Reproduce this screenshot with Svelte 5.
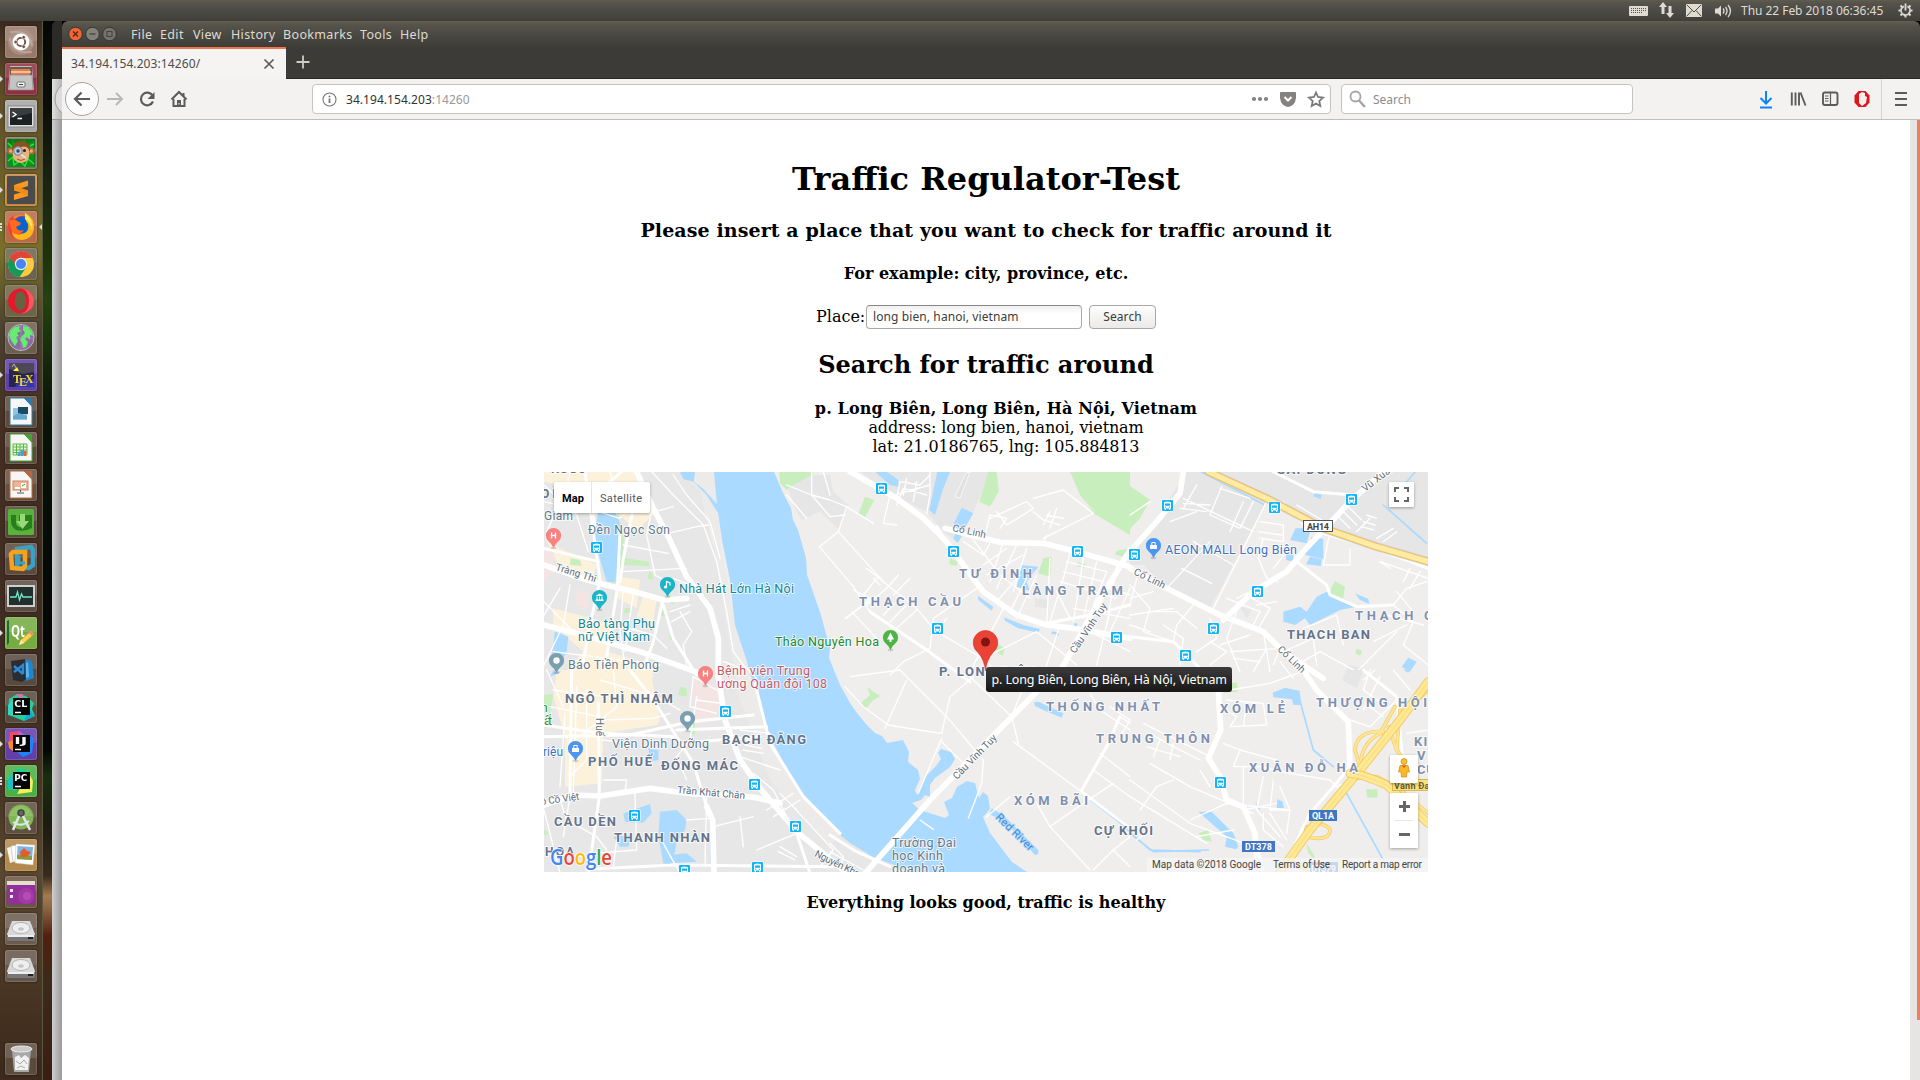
<script>
  const gloss = '<rect width="32" height="15" rx="2" fill="#fff" opacity=".13"/>';
  const doc = (c, inner) =>
    `<path d="M5 2H19L27 10V29H5Z" fill="#f6f7f6" stroke="${c}"/><path d="M19 2H27V11Z" fill="${c}"/>${inner}`;
  const disk =
    '<path d="M7 8H25L30 21V27H2V21Z" fill="#d8d8d8"/><path d="M2 22H30V27Q30 28 29 28H3Q2 28 2 27Z" fill="#777"/><path d="M3 22H29V24H3Z" fill="#eee"/><ellipse cx="16" cy="15" rx="9" ry="5.5" fill="#eee" stroke="#b5b5b5"/><ellipse cx="16" cy="16" rx="2.5" ry="1.3" fill="#ccc" stroke="#aaa" stroke-width=".5"/><path d="M23 25h5" stroke="#222" stroke-width="2"/>';
  const box = (t) =>
    `<rect x="8" y="7" width="17" height="17" fill="#050505"/><text x="9.3" y="15.5" font-size="9" font-weight="700" fill="#fff" font-family="DejaVu Sans" textLength="13" lengthAdjust="spacingAndGlyphs">${t}</text><path d="M10 21.500h6" stroke="#fff" stroke-width="1.500"/>`;

  const apps = [
    { n: 'Dash', bg: '#96796a', s: '<circle cx="16" cy="16" r="13" fill="#b39b8e" opacity=".6"/><path d="M5 6Q25 4 27 20M27 26Q6 28 5 12" fill="none" stroke="#cbb8ad" opacity=".6" stroke-width="2"/><circle cx="16" cy="16" r="8.500" fill="#fff"/><circle cx="16" cy="16" r="4.200" fill="none" stroke="#6a4c3c" stroke-width="1.800"/><g fill="#6a4c3c" stroke="#fff" stroke-width=".7"><circle cx="10.700" cy="16" r="1.800"/><circle cx="18.700" cy="11.300" r="1.800"/><circle cx="18.700" cy="20.700" r="1.800"/></g>' },
    { n: 'Files', bg: '#8f3146', pip: 1, s: '<path d="M5 4Q5 3 6 3H26Q27 3 27 4L29 27H3Z" fill="#bdbdbb"/><path d="M5 4H27V14H5Z" fill="#6e5848"/><path d="M6 6H25V13H6Z" fill="#e37b4a"/><path d="M6 9H26" stroke="#f6d6ba" stroke-width="1.500"/><path d="M5 12H27L28 27H4Z" fill="#c4c4c2" stroke="#888" stroke-width=".7"/><rect x="12" y="19" width="8" height="5" rx="1" fill="#eee" stroke="#777"/><path d="M14 21.500h4" stroke="#444"/>' },
    { n: 'Terminal', bg: '#a5a5a3', pip: 1, s: '<rect x="3" y="6" width="26" height="21" fill="#ddd" stroke="#888"/><rect x="5" y="8" width="22" height="17" fill="#1c2224"/><path d="M5 8H27V13L5 18Z" fill="#47494a" opacity=".7"/><path d="M7.500 12L11 14.500L7.500 17M12.500 18.500H17" stroke="#fff" fill="none" stroke-width="1.400"/>' },
    { n: 'Mono', bg: '#7c6f5f', s: '<rect x="2" y="2" width="28" height="28" fill="#11781a"/><path d="M2 4L6 9L7 2L11 8L20 2L21 8L29 3V30H2Z" fill="#0a921b"/><path d="M3 24L8 20L9 28L15 24L20 29L23 22L29 27M3 6L7 10M29 7L25 9" stroke="#31e03c" fill="none" stroke-width="1.500"/><circle cx="5.500" cy="14" r="3.500" fill="#a76b38"/><circle cx="26.500" cy="14" r="3.500" fill="#a76b38"/><circle cx="5.800" cy="14" r="1.800" fill="#e5ac74"/><circle cx="26.200" cy="14" r="1.800" fill="#e5ac74"/><path d="M7 14Q7 4 16 4Q25 4 25 14Z" fill="#8a4f22"/><path d="M8 13Q10 8 16 10Q22 8 24 13Q26 25 16 26Q6 25 8 13Z" fill="#e8b27c"/><circle cx="19.500" cy="13.500" r="1.500" fill="#222"/><circle cx="13" cy="14" r="4.200" fill="#b9cbd9" stroke="#778"/><circle cx="13" cy="14" r="1.700" fill="#345"/><path d="M16 17.500L21 21" stroke="#dde" stroke-width="2"/><path d="M12 22Q16 25 20 22" stroke="#96603a" fill="none"/>' },
    { n: 'Sublime Text', bg: '#c28440', pip: 1, s: '<rect x="2" y="2" width="28" height="28" rx="1" fill="#4b4b4b"/><path d="M9 11L23 6.500V12L16 14.300L23 16.500V22L9 26V20.500L16 18.500L9 16.500Z" fill="#ff9820"/><path d="M9 16L9 11L23 16.500V22Z" fill="#e77f0d" opacity=".5"/>' },
    { n: 'Firefox', bg: '#b96a49', pip: 3, focus: true, s: '<circle cx="16" cy="16.500" r="12.500" fill="#ff8a16"/><path d="M3 16Q3 7 8 5L9 8Q19 1 25 9Q29 25 16 29Q4 28 3 16Z" fill="#f43b3a"/><circle cx="17" cy="14" r="8.500" fill="#0a62d2"/><path d="M20 2Q30 7 29 18Q27 29 16 29Q7 28 7 20Q11 25 16 23Q25 22 23 13Q19 8 20 2Z" fill="#ffb91e"/><path d="M20 2Q29 8 27 19Q25 10 20 8Z" fill="#ffe95c"/><path d="M4 10Q9 7 14 11Q17 12 15 14L11 16Q13 21 19 19Q14 26 7 21Z" fill="#ff6a1b"/>' },
    { n: 'Chrome', bg: '#6c6450', s: '<circle cx="16" cy="16" r="13" fill="#fdca3e"/><path d="M16 16L4.700 9.500A13 13 0 0 0 14.500 29L21.500 19Z" fill="#129b58"/><path d="M4.700 9.500A13 13 0 0 1 27.500 10H16L10 16Z" fill="#e0453a"/><circle cx="16" cy="16" r="6.200" fill="#eee"/><circle cx="16" cy="16" r="5" fill="#4486f4"/>' },
    { n: 'Opera', bg: '#6f6448', s: '<ellipse cx="16" cy="16" rx="13" ry="12.500" fill="#e3192b"/><path d="M16 3.500A13 12.500 0 0 1 16 28.500Q24 27 24 16Q24 5 16 3.500" fill="#ff5560"/><ellipse cx="15.500" cy="16" rx="5.800" ry="9.500" fill="#6a6140"/>' },
    { n: 'Globe', bg: '#6c5f50', s: '<circle cx="16" cy="15.500" r="13" fill="#8a6ca0" stroke="#c0b6c6"/><path d="M4 13L6 8L10 5L15 4L14 7L16 9L12 11L14 14L11 15L13 19L10 24L7 20L5 16ZM18 4L23 5L27 10L28 14L25 13L25 18L22 15L20 17L23 20L21 25L18 26L17 21L15 18L17 14L20 11L18 8Z" fill="#63ef6d"/><path d="M3 16H29M16 3V28" stroke="#bba3c8" stroke-width=".5"/>' },
    { n: 'TeX', bg: '#6040a8', pip: 1, s: '<rect x="4" y="4" width="25" height="24" fill="#26254f"/><path d="M4 4H29V13L18 15L4 10Z" fill="#4c4855"/><path d="M8 12L12 8L14 12Z" fill="#fff13a"/><path d="M7 8L9 5L11 9" stroke="#ddd" fill="none" stroke-width=".7"/><path d="M14 20H29V28H10Z" fill="#2c37b0"/><text font-family="Liberation Serif" font-size="12" font-weight="700" fill="#f4d624"><tspan x="8" y="23.500">T</tspan><tspan x="14" y="27">E</tspan><tspan x="20" y="23.500">X</tspan></text>' },
    { n: 'Writer', bg: '#5d4a3d', s: doc('#2e7cab', '<rect x="8" y="12" width="14" height="12" fill="#8cc6e6"/><path d="M13 11H23V18H13Z" fill="#1d4a61"/><path d="M8 20L14 17L22 20V23H8Z" fill="#64a8cf"/>') },
    { n: 'Calc', bg: '#5d4a3d', s: doc('#43a52b', '<path d="M8 12H22V23H8ZM8 15H22M8 18H22M8 20.500H22M11.500 12V23M15 12V23M18.500 12V23" fill="#e6f6e0" stroke="#5bb845"/><path d="M14 24V20M17 24V18" stroke="#4b9fe0" stroke-width="2.500"/><path d="M20 24V19" stroke="#e8613a" stroke-width="2.500"/>') },
    { n: 'Impress', bg: '#66503f', s: doc('#b8683f', '<rect x="8" y="12" width="15" height="9" fill="#f0b598" stroke="#c88567"/><path d="M10 18H15V20H10ZM16 14H21V19H16Z" fill="#fff"/><path d="M17 17L20 15" stroke="#3c9b33"/><path d="M15.500 21V23M12 24H19" stroke="#555"/>') },
    { n: 'uGet', bg: '#574739', s: '<rect x="3" y="3" width="26" height="26" rx="1.500" fill="#56b23a"/><path d="M6 9H11V18Q13 22 17 21V15H14V9H27V22Q20 26 11 24Q6 21 6 15Z" fill="#2a7d1c"/><path d="M15 8H20V15H24L17.500 23L11 15H15Z" fill="#97d878"/>' },
    { n: 'VMware', bg: '#5d4a3d', s: '<path d="M12 6L26 4L28 7V22L24 25H12Z" fill="none" stroke="#3aa1c5" stroke-width="4.500"/><path d="M6 11L8 9H20V23L18 26L7 25Z" fill="none" stroke="#f6a21d" stroke-width="4.500"/><path d="M14 13V20H20" fill="none" stroke="#3aa1c5" stroke-width="3"/>' },
    { n: 'Monitor', bg: '#5d4c42', s: '<rect x="3" y="6" width="26" height="20" fill="#22302d" stroke="#cfcfcf" stroke-width="2"/><path d="M5 17H11L12.500 12L14.500 20L16.500 14L18 17H27" fill="none" stroke="#73e5cb" stroke-width="1.300"/>' },
    { n: 'Qt Creator', bg: '#76ac42', pip: 1, s: '<path d="M2 4L4 3V26L2 28Z" fill="#196b3d"/><text x="6" y="19.500" font-family="Open Sans" font-size="16" font-weight="700" fill="#fff" textLength="14" lengthAdjust="spacingAndGlyphs">Qt</text><path d="M14 28L16 23L26 14L29 17L19 26Z" fill="#ffd34d" stroke="#f0a030" stroke-width=".6"/><path d="M24 16L26 14L29 17L27 19Z" fill="#e88a7e"/><path d="M14 28L16 23L19 26Z" fill="#fbe8c8"/>' },
    { n: 'Code', bg: '#594a40', s: '<path d="M6 7L21 5V25L17 28L8 26Z" fill="#2a2d33"/><path d="M20 5L27 7L29 24L21 27Z" fill="#2084cf"/><path d="M21 9L23 8L24 23L21 24Z" fill="#5cb6ee"/><path d="M9 12L18 20M9 18L18 11V20" stroke="#2b8bd4" stroke-width="2.500" fill="none"/>' },
    { n: 'CLion', bg: '#574a3c', s: '<path d="M4 8L12 3L21 5L29 12L27 18L30 25L19 30L9 26L3 24Z" fill="#22cfa0"/><path d="M11 3L18 3L17 10Z" fill="#e06ba8"/><path d="M19 30L29 25L24 18Z" fill="#15a7d6"/><path d="M3 14L8 9V24L3 24Z" fill="#2fd8c3"/>' + box('CL') },
    { n: 'IntelliJ', bg: '#623fa9', pip: 1, s: '<path d="M5 4L15 3L17 13L4 14Z" fill="#fb4668"/><path d="M3 14L9 12V24L4 20Z" fill="#f98a2a"/><path d="M19 6L29 10L27 25L18 29L13 25Z" fill="#1f83f5"/><path d="M14 3L21 8L12 9Z" fill="#c95dd4"/>' + box('IJ') },
    { n: 'PyCharm', bg: '#4cae44', pip: 3, s: '<path d="M3 12L13 3L25 6L24 14L10 26L3 24Z" fill="#20d28b"/><path d="M23 6L28 16L27 27L12 29L20 14Z" fill="#f2f056"/><path d="M3 14L9 9V25L3 23Z" fill="#1bc0c4"/>' + box('PC') },
    { n: 'Android Studio', bg: '#60503f', s: '<circle cx="16" cy="15" r="12.500" fill="#7fb554"/><path d="M8 7Q16 1 24 7L28 14H4Z" fill="#a0cc78" opacity=".5"/><circle cx="16" cy="11" r="3" fill="#666" stroke="#444" stroke-width="1.500"/><path d="M14 14L8 28M18 14L25 28" stroke="#dfe5e9" stroke-width="2.600"/><path d="M8 20Q16 26 24 19" stroke="#dfe5e9" stroke-width="1.800" fill="none"/>' },
    { n: 'Shotwell', bg: '#b3894c', pip: 1, s: '<path d="M2 9L8 7L11 22L5 24Z" fill="#f7f7f0"/><path d="M6 7L12 6L14 22L8 23Z" fill="#fff" stroke="#aaa" stroke-width=".5"/><path d="M11 5L30 6L28 26L10 24Z" fill="#fff" stroke="#bbb" stroke-width=".5"/><path d="M12.500 7L28 8L27 21L12 20Z" fill="#7db5e5"/><path d="M12 16L27 17V21L12 20Z" fill="#8a9d34"/><path d="M19 9L22 12L26 13L23 17L20 18L16 18L15 13Z" fill="#e45b2c"/>' },
    { n: 'Workspace', bg: '#6c5544', s: '<rect x="2" y="6" width="28" height="22" rx="1" fill="#932f9b"/><circle cx="21" cy="20" r="8" fill="#b045b0" opacity=".5"/><circle cx="22" cy="20" r="4" fill="#c862c6" opacity=".5"/><path d="M2 5H30V9H2Z" fill="#e2dfcc"/><path d="M5 13H8V16H5ZM5 19H8V22H5Z" fill="#f0e5ef"/>' },
    { n: 'Volume', bg: '#6c5c50', s: disk },
    { n: 'Volume', bg: '#665649', s: disk },
    { n: 'Trash', bg: '#5b4b3d', last: true, s: '<path d="M7 7H26L24 29H9Z" fill="#a8a8a6"/><ellipse cx="16.500" cy="6" rx="10.500" ry="3" fill="#c9c9c7" stroke="#eee"/><path d="M10 14L14 12L16 15L20 12L24 15L23 27H10Z" fill="#f1f1f1"/><path d="M11 18L15 21L19 17L22 21M12 25L16 23L20 25" stroke="#aaa" fill="none"/>' }
  ];

  const menus = [
    ['File', 29], ['Edit', 33], ['View', 38], ['History', 52],
    ['Bookmarks', 77], ['Tools', 40], ['Help', 36]
  ];

  // Map sheets: each is drawn on a 3x grid whose origin sits at (x, y).
  const sheets = [
    { x: 540, y: 465,
      commercial: ['M12 20H300L345 140L290 200L250 160L210 150L150 150L60 60L12 50Z', 'M12 210L60 250L170 300L155 345L50 290Z', 'M40 430L230 480L200 560L340 600V640H60L130 560L40 480Z', 'M235 335L300 345L290 430L225 395Z', 'M310 390L350 400L340 470L290 455Z'],
      health: ['M12 255L42 260L38 320L12 345Z', 'M110 375L150 385L140 430L108 420Z'],
      green: ['M250 278L327 290V304L250 300Z', 'M92 280L120 285L125 303L90 300Z', 'M330 310L342 345L322 340Z', 'M255 430H275V445H250Z', 'M385 390L408 395L400 420L375 405L375 455L360 450Z', 'M718 21H820L815 60L790 45L740 75L720 55Z', 'M390 510L402 525H388Z', 'M230 130L252 210L250 270L238 350L210 360L240 250Z'],
      water: ['M175 140H225L245 190L243 265L225 350L200 350L185 300L160 215Z', 'M420 21H465L462 50L490 72L538 125L546 162L520 122L500 90L460 50L430 42Z', 'M45 500L85 515L80 560L60 600L35 580Z'],
      major: ['M290 20L340 130L385 215L440 335L510 430L535 520L535 640', 'M12 300L110 335L190 358L300 385L370 405L440 400', 'M12 480L130 510L300 560L480 625'],
      medium: ['M135 20L180 345L150 480L120 640', 'M245 20L150 100L165 180', 'M240 200L232 370L190 640', 'M12 250L175 290', 'M280 130L250 280L240 350', 'M370 420L400 520L470 630', 'M370 400L340 530L300 640'],
      minor: ['M335 20L400 90L490 180L530 290L560 440L580 560L610 600L650 640', 'M12 60L110 150L145 260', 'M12 110L140 140', 'M210 20L240 130', 'M300 100L240 160L175 140', 'M90 20L80 70L20 200', 'M250 240L385 265M245 320L440 310', 'M335 135L320 210L345 330L380 350', 'M385 205L470 185L505 180M400 125L345 140', 'M400 30L440 90L510 170L540 280', 'M400 340L450 360L510 430', 'M12 410L90 490M60 370L12 450M90 360L70 480L12 600', 'M250 375L240 500L260 640M190 470L340 510L380 550', 'M280 385L255 560', 'M420 440L455 500L430 540L440 600M550 590L610 610', 'M40 560L360 600', 'M390 440L450 420M395 470L450 440'] },
    { x: 540, y: 670,
      commercial: ['M50 0H330L360 150L350 165L190 190L185 340L75 350L75 200L40 80Z'],
      health: ['M455 20L545 60L530 150L470 165Z'],
      green: ['M12 75L40 72L30 130L12 128Z', 'M420 50L440 55V80L415 75Z', 'M448 140L465 150V195L450 190Z', 'M12 480L25 485L20 495H12Z'],
      water: ['M250 430L330 402L335 430L310 458L255 455Z', 'M360 425L410 420L440 450L435 480L410 515L405 545L390 585L370 580L355 500Z', 'M325 235L355 240L355 270L330 275Z', 'M512 430L524 440V590L512 590Z', 'M220 500L275 495L265 530L240 530Z', 'M388 555L440 550L470 575L390 580Z', 'M40 0L65 5L30 20Z'],
      major: ['M12 405L100 375L180 378L330 355L460 372L570 375L650 383L720 400', 'M535 20L555 150L600 270L660 355L770 485L910 600', 'M500 410L518 450L522 610'],
      medium: ['M175 100L178 380L145 610', 'M95 0L90 370', 'M12 200L270 195L450 155L640 135', 'M270 0L340 90L460 280L500 410', 'M770 490L810 610', 'M140 598L400 585L900 590', 'M12 165L180 190L400 200', 'M645 40L690 220L790 380L900 490', 'M470 215L660 200M410 180L680 170'],
      minor: ['M40 60L200 80M30 110L180 140M75 130L60 350M110 50L100 370M140 60L140 270L90 320M220 0L230 110L120 200', 'M20 0L70 110M180 30L350 80L420 120', 'M190 150L340 145L390 130M185 210L290 220M190 330L260 330L255 370', 'M470 80L450 210L410 260L440 330', 'M530 60L460 20L450 110L530 130M545 100L470 90', 'M600 260L720 300M610 240L670 250M615 225L665 235M620 210L660 215M600 180L690 190', 'M640 310L700 360L740 440L830 540M680 420L760 370M700 440L780 390', 'M750 400L880 540L840 590M720 370L770 420', 'M285 370L290 540L160 550M12 420L60 610M90 380L70 500', 'M440 450L510 445M370 520L420 610M520 470L640 440M600 440L610 530M770 490L650 540', 'M720 530L770 560M715 545L765 570', 'M12 550L140 560M200 540L170 500L80 450L60 390', 'M230 510L220 590M500 380L495 580'] },
    { x: 830, y: 465,
      green: ['M475 20H720L750 90L790 145L900 210V20H540L480 125L448 110Z', 'M105 95L133 105L105 157L85 148Z', 'M640 280L665 275L660 335L625 325Z', 'M360 280L385 290L378 303L358 298Z', 'M500 535L525 550L518 572L498 560Z', 'M742 292L768 297L762 308L740 303Z', 'M860 258L895 250L885 278L855 268Z', 'M-150 22H-50L-100 45L-130 65L-150 55Z'],
      fill: ['M500 20H680L800 145L715 75L615 95L580 125L530 150L485 145L480 125L510 110Z'],
      grey: ['M90 20H480L435 130L385 235L340 200L290 140L190 90Z', 'M-125 70L-55 30H0L10 80L55 120L28 195L-30 140L-85 165L-105 130Z', 'M615 400L655 405L650 430L615 425Z'],
      water: ['M135 20H170L205 45L205 65L180 60Z', 'M322 20H360L340 70L315 150L298 135Z', 'M395 128L430 145L410 180L395 200L395 215L382 233L370 220L380 200L372 175Z', 'M575 300L625 305L590 350L600 378L560 365Z', 'M443 392L490 425L485 437L445 405Z', 'M522 457L580 480L630 492L625 503L565 490L525 467Z', 'M665 500Q680 497 688 508L685 512Q675 505 665 508Z', 'M732 475H742V487H732Z'],
      major: ['M60 20L200 100L280 160L345 225L400 300L460 380L560 450L650 480L730 490L900 520', 'M345 190L440 215L510 232L640 235L740 260L900 305', 'M690 620L800 420L900 255'],
      medium: ['M345 225L320 185', 'M650 475L780 450L900 420', 'M120 440L290 555L420 650'],
      minor: ['M-55 20V90L0 105L50 125L25 200L-32 245L70 365L120 440', 'M25 200L160 350L260 430L310 490', 'M50 125L130 175M-130 90L-70 160M-55 90L-130 60M-55 90L0 155L45 150M-20 20L0 90', 'M70 375L120 400L50 460M65 440L140 520', 'M320 500L440 570L480 600', 'M300 20L300 90L290 145', 'M300 60L190 90M290 90L220 70L200 120M300 30L270 60L210 50L200 100M260 50L250 110M230 40L220 90', 'M180 90L160 175L200 180', 'M440 370L310 460L300 550L220 590L180 630', 'M160 350L110 310M150 360L130 340M170 370L205 330M170 370L110 420M190 390L240 340M210 400L160 450M230 420L180 470M260 435L200 490', 'M45 460L130 400M140 340L100 390M320 500L350 460', 'M480 235L460 270L400 230M430 225L510 330L600 400M460 300L530 250M470 330L580 270M520 230L480 350M560 240L500 370M590 250L550 380', 'M510 190L530 160L480 150L465 210M480 160L590 110L610 130L530 180L500 140M610 100L700 75L790 145L640 220M610 140L640 165L690 180M650 150L700 160M660 140L640 180M680 130L660 190', 'M640 235L650 210M720 265L700 340L660 470M660 280L650 480M540 440L590 340M560 460L620 330M500 410L570 330', 'M710 290L830 320M700 320L820 350M760 280L730 470M800 290L760 460M690 350L860 400M830 320L790 420M680 380L720 460M840 370L900 390', 'M520 430L420 620M690 480L640 630M480 570L620 500L740 600M840 440L800 600M780 500L900 560', 'M730 430L900 460M860 300L830 480M900 370L840 500'] },
    { x: 830, y: 670,
      green: ['M112 52L150 78L128 92L105 118L93 98L120 75Z'],
      water: ['M612 97L625 95L700 130L695 143L640 120L615 108Z', 'M485 415L520 435L625 540L625 553L615 555L530 460L478 432Z'],
      waterline: ['M770 380L860 450L960 540L1110 545'],
      major: ['M110 605L300 390L620 65'],
      medium: ['M0 495L80 545L180 590', 'M755 365L900 475', 'M755 360L830 230L870 140'],
      minor: ['M45 50L100 110L175 165L265 180L335 190', 'M60 20L210 0L350 140L460 270L455 340L415 445', 'M335 190L360 80L430 20M335 205L265 370', 'M335 215L400 280M165 175L230 30M420 20L545 140L565 220', 'M550 215L755 365', 'M545 140L575 65M620 400L660 470L780 600', 'M660 470L760 400L850 340M850 540L900 500M790 600L850 540L900 590', 'M790 300L900 380M810 250L900 320M870 140L900 160M840 110L900 150L870 200', 'M780 70L810 120L900 180M470 440L540 380', 'M0 520L40 560L30 600M270 450L310 478', 'M0 545L100 600'] },
    { x: 1130, y: 465,
      grey: ['M170 20H895V285L600 200L580 180L410 110L240 430L110 370L40 300H0L0 280Z', 'M600 20H895V295L580 190Z', 'M330 425L365 435L350 460Z', 'M655 600L700 610L690 640H640Z'],
      green: ['M0 62L60 105L30 160L0 192Z', 'M605 365L615 348L645 365L640 400L600 385Z', 'M680 550L697 558L690 573L676 565Z'],
      water: ['M497 190L520 190L525 202L540 200L530 235L480 225Z', 'M545 215L580 222V282L525 270Z', 'M540 275L575 282L573 303L528 298Z', 'M460 440L510 425L530 440L560 395L590 380L625 405L680 425L630 435L590 455L540 480L525 460L495 480L460 470Z', 'M675 385L715 402L718 417L690 405Z', 'M835 578L860 590L840 620L815 605Z', 'M470 260L490 265V290L468 285Z', 'M556 82L575 90L572 102L550 94Z'],
      waterline: ['M215 21L400 118', 'M830 50L855 21', 'M760 120L890 235'],
      major: ['M160 20L150 85L80 170L0 260', 'M0 310L110 370L270 450L400 500L460 560L580 640', 'M280 465L370 380L470 320L520 260L660 110L760 20'],
      medium: ['M580 205L720 245L895 310', 'M500 290L590 360L600 390L680 425L790 420', 'M0 515L130 530L240 640', 'M670 90L550 80L430 20'],
      minor: ['M410 110L250 430M160 100L370 200M275 65L240 150L330 190L370 110M200 60L160 130M150 130L230 140M160 115L240 120M270 70L360 100M300 200L340 110M200 140L120 170', 'M0 150L60 110M155 310L245 355M110 370L240 230M190 230L310 300', 'M400 220L385 280L410 340L445 350M390 170L460 180L460 230L390 220M385 200L455 210M470 260L430 310', 'M520 180L460 110M600 200L580 300L660 300L660 250M600 180L500 120', 'M520 490L620 450L640 540M790 420L830 370L890 350M790 420L850 470L820 540L895 600', 'M800 380L850 440M770 450L880 480M730 530L830 480M570 560L680 620L800 500', 'M780 310L750 290L895 340M840 310L820 350M870 320L840 370M720 160L680 200M710 150L740 160M700 170L735 180M695 185L730 195', 'M620 150L660 190M635 135L680 180M650 120L695 165M790 190L740 220M800 200L760 230', 'M0 360L60 430L40 500L130 530L140 480L190 420M0 400L70 380M0 450L130 430M20 340L0 420M70 440L140 440L200 490', 'M100 480L160 520L150 600M60 500L0 480', 'M290 400L390 440L370 480M320 400L400 360M350 390L420 430L380 500M380 420L440 410M320 440L290 520L330 620M400 500L420 620M240 530L290 560L240 600M300 560L450 550L430 600', 'M270 540L360 510M410 550L370 620M460 560L550 520L560 600M500 600L570 560M310 580L390 590M240 460L260 520L200 560M450 590L490 640'],
      rail: ['M235 20L410 100L580 190L740 245L895 290'] },
    { x: 1130, y: 670,
      green: ['M290 38H322V65L285 68Z', 'M708 358L742 357L743 382L712 383Z', 'M530 520L555 560L550 565L535 550Z', 'M205 490L235 480L245 515L220 510Z'],
      grey: ['M650 0H700L680 55L635 30Z'],
      water: ['M428 68L465 53L508 62L515 105L490 105L485 88L430 82Z', 'M205 425L245 425L310 490L325 530L318 538L285 530L290 500Z', 'M442 387L458 395L462 415H440Z', 'M375 395L392 415L385 418Z'],
      waterline: ['M512 100L550 240L610 290', 'M650 370L760 570', 'M0 490L70 545L235 540', 'M825 0L835 5', 'M295 390L285 370'],
      major: ['M265 60L272 180L235 265L270 320L290 390L340 410L375 490L380 560', 'M520 0L560 60L655 155L660 290'],
      medium: ['M660 290L610 350L540 430L515 480L490 540', 'M270 320L290 400', 'M700 0L800 80L820 290', 'M380 520L400 600'],
      minor: ['M40 160L240 260M60 280L180 350L370 430M0 330L180 460L370 530', 'M0 380L230 520M180 450L290 400M30 420L80 350L130 330M210 300L240 350', 'M270 110L320 140L300 170L410 165L400 100L290 90M350 100L340 170', 'M280 220L330 240L310 290L390 290L480 310L600 330M330 240L440 270M340 290L340 400M400 320L380 420L450 500M430 330L420 420L480 420M450 350L480 420L470 490', 'M290 400L380 410L480 420M420 430L470 510M400 430L400 480L460 530M340 420L440 400', 'M660 150L720 170L800 90M720 0L700 60L770 110M735 0L700 30M750 20L700 120M720 110L760 140M790 0L840 60M830 190L895 180', 'M60 190L130 230L210 270M50 230L150 260M90 210L70 260M130 220L120 270M60 480L20 510M310 480L200 500', 'M300 60L420 40L530 0M280 0L260 60M600 330L640 370M610 350L650 340'],
      highway: ['M895 35L810 150L690 300L540 480L440 620', 'M660 310Q690 310 770 345L895 460'],
      ramp: ['M760 185Q680 180 675 240L690 290', 'M710 265Q780 200 755 180M775 170L800 240', 'M690 300Q690 220 750 190L795 110M810 120L800 240L840 290', 'M530 470L520 520L480 570L530 600M560 460Q620 470 590 500Q570 510 530 500M680 325L740 320L800 350L895 430', 'M820 130L895 60'] }
  ];

  // [x, baseline, width, text, size, class, rotation]
  const labels = [
    [551, 473, 35, 'NG DU', 12, 'ward'], [541, 498, 20, 'ON', 12, 'ward'],
    [544, 520, 29, 'Giam', 12, 'poi'], [588, 534, 82, 'Đền Ngọc Sơn', 12, 'poi'],
    [555, 570, 42, 'Tràng Thi', 10, 'road', 17], [679, 593, 115, 'Nhà Hát Lớn Hà Nội', 12.5, 'teal'],
    [578, 628, 77, 'Bảo tàng Phụ', 12.5, 'teal'], [578, 641, 72, 'nữ Việt Nam', 12.5, 'teal'],
    [568, 669, 91, 'Báo Tiền Phong', 12.5, 'poi'], [775, 646, 104, 'Thảo Nguyên Hoa', 12.5, 'park'],
    [717, 674.5, 93, 'Bệnh viện Trung', 12.5, 'med'], [717, 688, 110, 'ương Quân đội 108', 12.5, 'med'],
    [565, 702.5, 108, 'NGÔ THÌ NHẬM', 13, 'ward'], [596, 718, 18, 'Huế', 10, 'road', 90],
    [612, 748, 97, 'Viện Dinh Dưỡng', 12.5, 'poi'], [722, 744, 84, 'BẠCH ĐẰNG', 13, 'ward'],
    [541, 712, 6, 'n', 12, 'park'], [544, 725, 8, 'ất', 12, 'park'], [543, 756, 20, 'riệu', 12, 'shop'],
    [588, 766, 64, 'PHỐ HUẾ', 13, 'ward'], [661, 770, 77, 'ĐỐNG MÁC', 13, 'ward'],
    [677, 793, 68, 'Trần Khát Chân', 10, 'road', 5], [541, 805, 39, 'ồ Cồ Việt', 10, 'road', -8],
    [554, 826, 62, 'CẦU DỀN', 13, 'ward'], [614, 842, 96, 'THANH NHÀN', 13, 'ward'],
    [545, 856, 29, 'HOA', 12, 'ward'], [814, 856, 56, 'Nguyễn Khoái', 10, 'road', 26],
    [952, 531, 34, 'Cổ Linh', 10, 'road', 12], [959, 578, 73, 'TƯ ĐÌNH', 13, 'area'],
    [1022, 595, 101, 'LÀNG TRẠM', 13, 'area'], [859, 606, 102, 'THẠCH CẦU', 13, 'area'],
    [1075, 654, 58, 'Cầu Vĩnh Tuy', 10, 'road', -56], [939, 676, 96, 'P. LONG BIÊN', 13, 'ward'],
    [1046, 711, 114, 'THỐNG NHẤT', 13, 'area'], [1096, 743, 114, 'TRUNG THÔN', 13, 'area'],
    [957, 780, 58, 'Cầu Vĩnh Tuy', 10, 'road', -46], [1014, 805, 74, 'XÓM BÃI', 13, 'area'],
    [1094, 835, 59, 'CỰ KHỐI', 13, 'ward'], [995, 818, 48, 'Red River', 11, 'river', 44],
    [892, 847, 64, 'Trường Đại', 12.5, 'poi'], [892, 860, 51, 'học Kinh', 12.5, 'poi'],
    [892, 873, 53, 'doanh và', 12.5, 'poi'], [1165, 554, 132, 'AEON MALL Long Biên', 12.5, 'shop'],
    [1133, 574, 34, 'Cổ Linh', 10, 'road', 26], [1277, 650, 34, 'Cổ Linh', 10, 'road', 44],
    [1277, 474, 69, 'SÀI ĐỒNG', 13, 'ward'], [1365, 492, 38, 'Vũ Xuân', 10, 'road', -37],
    [1355, 620, 102, 'THẠCH CẦU', 13, 'area'], [1287, 639, 83, 'THACH BAN', 13, 'ward'],
    [1220, 713, 65, 'XÓM LẺ', 13, 'area'], [1316, 707, 111, 'THƯỢNG HỘI', 13, 'area'],
    [1249, 772, 109, 'XUÂN ĐỖ HẠ', 13, 'area'], [1414, 746, 26, 'KIM', 13, 'area'],
    [1417, 760, 22, 'VĂ', 13, 'area'], [1417, 774, 30, 'CỤM', 13, 'area']
  ];

  const buses = [
    [596.5, 547.5], [725.5, 711.5], [754.5, 784.5], [634.5, 815.5], [795.5, 826.5], [684.5, 870.5], [757.5, 867.5],
    [881.5, 488.5], [953.5, 551.5], [1077.5, 551.5], [1134.5, 554.5], [937.5, 628.5], [1116.5, 637.5],
    [1167.5, 505.5], [1274.5, 507.5], [1351.5, 499.5], [1257.5, 591.5], [1213.5, 628.5], [1185.5, 655.5], [1220.5, 782.5]
  ];

  const hGlyph = '<path d="M-2-3V3M2-3V3M-2 0H2" stroke="#fff" stroke-width="1.300"/>';
  const dot = '<circle r="3.200" fill="#fff"/>';
  const bag = '<path d="M-3.500-.5H3.500V3.500H-3.500Z" fill="#fff"/><path d="M-1.700-.5V-3H1.700V-.5" fill="none" stroke="#fff"/>';
  const pins = [
    [553.5, 548, '#f88181', hGlyph],
    [667.5, 597, '#1bb5c7', '<path d="M-1 3V-3L2.500-1.500V1" fill="none" stroke="#fff" stroke-width="1.200"/><circle cx="-2" cy="2.500" r="1.500" fill="#fff"/>'],
    [599.5, 610, '#1bb5c7', '<path d="M-4-1.500L0-4L4-1.500ZM-4 2H4V3.500H-4ZM-3-1H-2V2H-3ZM-.5-1H.5V2H-.5ZM2-1H3V2H2Z" fill="#fff"/>'],
    [556.5, 673, '#7b9eb0', dot],
    [705.5, 686, '#f88181', hGlyph],
    [687.5, 731, '#7b9eb0', dot],
    [575.5, 761, '#4b96f3', bag],
    [890.5, 650, '#4db546', '<path d="M0-5L3.500 2H1V4.500H-1V2H-3.500Z" fill="#fff"/>'],
    [1153.5, 558, '#4b96f3', bag]
  ];

  const river =
    'M714 472L717 505L722 540L730 580L735 625L747 662L757 697L770 737L797 787L840 835L850 843L873 857L897 866L908 872H1027L1012 862L990 833L983 817L990 809L988 796L983 792L979 798L975 783L967 781L957 787L952 798L944 802L949 815L945 818L920 810L912 803L921 800L925 795L930 797L930 785L935 778L950 767L955 759L951 752L941 749L938 753L941 759L936 766L926 776L920 788L917 795L915 790L920 779L918 770L908 762L909 752L903 740L887 743L882 736L875 733L866 724L857 713L850 703L840 685L829 658L830 648L820 612L807 575L806 558L798 530L793 520L791 508L784 495L774 472Z';
</script>

<div class="desktop">
  <header class="panel">
    <svg width="20" height="12" viewBox="0 0 20 12"><rect y="1" width="19" height="10" rx="1" fill="#dfdbd2" /><path d="M2 3.500H17M2 5.500H17M2 7.500H14" stroke="#54524b" stroke-dasharray="1 1" /></svg>
    <svg class="g1" width="15" height="17" viewBox="0 0 15 17"><path d="M4 0L8 5H5.500V12H2.500V5H0ZM11 16L7 11H9.500V4H12.500V11H15Z" fill="#dfdbd2" /></svg>
    <svg class="g2" width="16" height="13" viewBox="0 0 16 13"><rect width="16" height="13" rx="1" fill="#dfdbd2" /><path d="M1 1L8 8L15 1M1 12L6 6.500M15 12L10 6.500" stroke="#4b4a45" fill="none" /></svg>
    <svg class="g3" width="17" height="14" viewBox="0 0 17 14"><path d="M0 4.500H3L6 1.500V12.500L3 9.500H0Z" fill="#dfdbd2" /><path d="M8 4.500Q10 7 8 9.500M10.500 3Q13.500 7 10.500 11M13 1Q18 7 13 13" fill="none" stroke="#dfdbd2" stroke-width="1.300" /></svg>
    <span class="clock">Thu 22 Feb 2018 06:36:45</span>
    <svg class="g4" width="15" height="15" viewBox="-7.500 -7.500 15 15"><g stroke="#dfdbd2" fill="none"><circle r="4.500" stroke-width="1.800" stroke-dasharray="24 4" transform="rotate(-65)" /><path d="M0-7V0" stroke-width="1.800" /><path d="M-5-5L-3.500-3.500M5-5L3.500-3.500M-7 0H-5M7 0H5M-5 5L-3.500 3.500M5 5L3.500 3.500M0 7V5" stroke-width="2" /></g></svg>
  </header>

  <div class="workspace">
    <nav class="launcher">
      {#each apps as app}
        <div class="slot" class:last={app.last}>
          <span class="pips">
            {#if app.pip === 1}<i></i>{:else if app.pip === 3}<b></b><b></b><b></b>{/if}
          </span>
          <svg class="tile" width="32" height="32" viewBox="0 0 32 32" aria-label={app.n}>
            <rect width="32" height="32" rx="2" fill={app.bg} />
            {@html gloss}
            <g>{@html app.s}</g>
            <rect x=".5" y=".5" width="31" height="31" rx="2" fill="none" stroke="#fff" opacity=".14" />
          </svg>
          {#if app.focus}<span class="focus"></span>{/if}
        </div>
      {/each}
    </nav>
    <div class="wallpaper"></div>
    <div class="back-window">
      <div class="bw-title"></div>
      <div class="bw-bar"><svg width="10" height="40" viewBox="0 0 10 40"><circle cx="20" cy="20" r="17" fill="#ddd" stroke="#999" /></svg></div>
      <div class="bw-body"></div>
    </div>

    <main class="window">
      <div class="titlebar">
        <svg width="50" height="16" viewBox="0 0 50 16">
          <circle cx="7.500" cy="8" r="6.800" fill="#ee6536" stroke="#37352f" /><path d="M5 5.500L10 10.500M10 5.500L5 10.500" stroke="#5b2410" stroke-width="1.300" />
          <circle cx="24.500" cy="8" r="6.800" fill="#83817a" stroke="#37352f" /><path d="M21.500 8H27.500" stroke="#45433e" stroke-width="1.300" />
          <circle cx="41.500" cy="8" r="6.800" fill="#75736c" stroke="#37352f" /><rect x="39" y="5.500" width="5" height="5" fill="none" stroke="#45433e" />
        </svg>
        <div class="menus">
          {#each menus as [name, w]}<span style:width="{w}px">{name}</span>{/each}
        </div>
      </div>
      <div class="tabs">
        <div class="tab"><span>34.194.154.203:14260/</span><svg width="12" height="12" viewBox="0 0 12 12"><path d="M1.500 1.500L10.500 10.500M10.500 1.500L1.500 10.500" stroke="#5b5a58" stroke-width="1.700" /></svg></div>
        <svg class="plus" width="16" height="16" viewBox="0 0 16 16"><path d="M8 1.500V14.500M1.500 8H14.500" stroke="#cfccc5" stroke-width="1.800" /></svg>
      </div>
      <div class="toolbar">
        <svg class="nav" width="140" height="40" viewBox="0 0 140 40" fill="none">
          <circle cx="20" cy="20" r="16.500" fill="#fcfcfc" stroke="#a5a4a2" />
          <path d="M28 20H13.500M19.500 13.500L13 20L19.500 26.500" stroke="#5c5b59" stroke-width="2.200" />
          <path d="M45 20H59.500M54 14L60 20L54 26" stroke="#b9b8b6" stroke-width="2" />
          <path d="M90.500 16.500A6.300 6.300 0 1 0 91 22.500" stroke="#5c5b59" stroke-width="2.200" /><path d="M92.500 13V20H85.500Z" fill="#5c5b59" />
          <path d="M109.500 20.500L117 13L124.500 20.500" stroke="#5c5b59" stroke-width="2" /><path d="M111.500 20V27H122.500V20M121.500 14V17" stroke="#5c5b59" stroke-width="2" /><path d="M115 21H119V27H115Z" fill="#5c5b59" /><path d="M117 24V25.500" stroke="#fff" />
        </svg>
        <div class="url">
          <svg width="15" height="15" viewBox="0 0 15 15" fill="none"><circle cx="7.500" cy="7.500" r="6.500" stroke="#757573" stroke-width="1.100" /><path d="M7.500 6.500V11M7.500 3.700V5.300" stroke="#757573" stroke-width="1.800" /></svg>
          <span class="addr">34.194.154.203<em>:14260</em></span>
          <svg width="78" height="20" viewBox="0 0 78 20"><g fill="#838281"><circle cx="5" cy="10" r="2.100" /><circle cx="11" cy="10" r="2.100" /><circle cx="17" cy="10" r="2.100" /><path d="M31 4Q31 3 32 3H46Q47 3 47 4V9Q46 17 39 18Q32 17 31 9Z" /></g><path d="M35.500 8L39 11.500L42.500 8" stroke="#fff" stroke-width="2" fill="none" /><path d="M67 3.500L69 8L74 8.600L70.300 12L71.300 17L67 14.500L62.700 17L63.700 12L60 8.600L65 8Z" fill="none" stroke="#7b7a79" stroke-width="1.800" /></svg>
        </div>
        <div class="search">
          <svg width="17" height="20" viewBox="0 0 17 20" fill="none" stroke="#a5a4a3"><circle cx="6.500" cy="7.500" r="5" stroke-width="1.800" /><path d="M10 11.500L16 18" stroke-width="2.400" /></svg>
          <span>Search</span>
        </div>
        <svg class="tools" width="152" height="40" viewBox="1758 79 152 40" fill="none">
          <path d="M1766 91V103M1760.500 98L1766 103.500L1771.500 98M1760 107.500H1772" stroke="#0a84ff" stroke-width="2" />
          <path d="M1791.800 92.500V105.500M1795.500 92.500V105.500M1799 92.500V105.500M1800.500 92.500L1805.500 105.500" stroke="#5c5b59" stroke-width="1.900" />
          <rect x="1823" y="92.500" width="14.500" height="12.500" rx="2" stroke="#5c5b59" stroke-width="1.900" /><path d="M1830.500 93V105M1825 96H1828.500M1825 98.500H1828.500M1825 101H1828.500" stroke="#5c5b59" stroke-width="1.200" />
          <path d="M1858.500 91H1865.500L1869.500 95.500V102.500L1865.500 107H1858.500L1854.500 102.500V95.500Z" fill="#e2171c" /><path d="M1859 94V103L1862 106L1866 103L1867 97L1865 96V93L1862 92Z" fill="#f6efee" />
          <path d="M1881.500 78V122" stroke="#d5d3d1" />
          <path d="M1895 93H1907M1895 99H1907M1895 105H1907" stroke="#5c5b59" stroke-width="2" />
        </svg>
      </div>
      <div class="viewport">
        <div class="page">
          <h1>Traffic Regulator-Test</h1>
          <h3>Please insert a place that you want to check for traffic around it</h3>
          <h4>For example: city, province, etc.</h4>
          <div class="form"><span>Place:</span><div class="input">long bien, hanoi, vietnam</div><button>Search</button></div>
          <h2>Search for traffic around</h2>
          <div class="info"><b>p. Long Biên, Long Biên, Hà Nội, Vietnam</b><br />address: long bien, hanoi, vietnam<br />lat: 21.0186765, lng: 105.884813</div>
          <svg class="map" width="884" height="400" viewBox="544 472 884 400">
            <rect x="544" y="472" width="884" height="400" fill="#efeeed" />
            <path d="M544 472H680L700 490L712 540L726 590L737 640L760 705L797 787L850 843L908 872H544Z" fill="#e7e7e7" />
            <path d="M695 472H716L720 540L727 578L737 632L770 737L840 835L830 845L770 780L740 700L724 610L712 530Z" fill="#ecebe9" />
            <path d={river} fill="#aadaff" />
            {#each sheets as s}
              <g transform="translate({s.x} {s.y}) scale(.33333)">
                {#each s.grey ?? [] as d}<path {d} fill="#e6e6e6" />{/each}
                {#each s.commercial ?? [] as d}<path {d} fill="#fcf2dc" />{/each}
                {#each s.health ?? [] as d}<path {d} fill="#f5e4e4" />{/each}
                {#each s.green ?? [] as d}<path {d} fill="#c9eebd" />{/each}
                {#each s.fill ?? [] as d}<path {d} fill="#efeeed" />{/each}
                {#each s.water ?? [] as d}<path {d} fill="#aadaff" />{/each}
                {#each s.waterline ?? [] as d}<path {d} class="ln" stroke="#aadaff" stroke-width="5" />{/each}
                {#each s.minor as d}<path {d} class="ln" stroke="#fff" stroke-width="4" />{/each}
                {#each s.medium as d}<path {d} class="ln" stroke="#fff" stroke-width="9" />{/each}
                {#each s.major as d}<path {d} class="ln" stroke="#fff" stroke-width="17" />{/each}
              </g>
            {/each}
            {#each sheets as s}
              <g transform="translate({s.x} {s.y}) scale(.33333)">
                {#each s.rail ?? [] as d}<path {d} class="ln" stroke="#c9d3db" stroke-width="26" /><path {d} class="ln" stroke="#f3c05a" stroke-width="22" /><path {d} class="ln" stroke="#ffeba5" stroke-width="16" />{/each}
                {#each s.ramp ?? [] as d}<path {d} class="ln" stroke="#f2cc68" stroke-width="11" />{/each}
                {#each s.ramp ?? [] as d}<path {d} class="ln" stroke="#ffe58f" stroke-width="7" />{/each}
                {#each s.highway ?? [] as d}<path {d} class="ln" stroke="#f0c65e" stroke-width="27" /><path {d} class="ln" stroke="#ffe894" stroke-width="22" /><path {d} class="ln" stroke="#f5d470" stroke-width="2" />{/each}
              </g>
            {/each}
            <path d="M955 497L966 473L970 472L960 498Z" fill="#e0e0e0" stroke="#f7f7f7" />

            {#each labels as [x, y, w, t, size, cls, rot]}
              <text {x} {y} class="lb {cls}" font-size={size} textLength={w} transform="rotate({rot ?? 0} {x} {y})">{t}</text>
            {/each}

            <rect x="1303.500" y="520.500" width="29" height="11" fill="#fff" stroke="#555" />
            <text x="1307" y="529.500" class="sh" fill="#444" textLength="22">AH14</text>
            <rect x="1309" y="810" width="28" height="11" fill="#3f77c4" /><text x="1312" y="819" class="sh" fill="#fff" textLength="22">QL1A</text>
            <rect x="1242" y="841" width="33" height="11" fill="#3f77c4" /><text x="1245" y="850" class="sh" fill="#fff" textLength="27">DT378</text>
            <rect x="1310" y="862" width="28" height="12" fill="#3f77c4" /><text x="1311" y="871.500" class="sh" fill="#fff" textLength="25">DT379</text>
            <rect x="1392.500" y="779.500" width="40" height="11" fill="#fbe07c" stroke="#d9b94e" /><text x="1394" y="788.500" class="sh" fill="#665c33" textLength="46">Vành Đai 3</text>

            {#each buses as [x, y]}
              <g transform="translate({x} {y})"><rect x="-6" y="-6" width="12" height="12" rx="1" fill="#fff" /><rect x="-5.500" y="-5.500" width="11" height="11" rx="1" fill="#12b5f8" /><path d="M-3.500-2.500Q-3.500-4 0-4Q3.500-4 3.500-2.500V3H3V4.200H1.500V3H-1.500V4.200H-3V3H-3.500Z" fill="#fff" /><path d="M-2.500-2H2.500V.3H-2.500ZM-2.500 1.300H-1.300V2.300H-2.500ZM1.300 1.300H2.500V2.300H1.300Z" fill="#12b5f8" /></g>
            {/each}
            {#each pins as [x, y, c, glyph]}
              <g transform="translate({x} {y - 12.5})"><ellipse cy="12.500" rx="3" ry="1.200" fill="#000" opacity=".15" /><path d="M0 12.500Q-1.500 8.500-5 5.800A7.600 7.600 0 1 1 5 5.800Q1.500 8.500 0 12.500Z" fill={c} />{@html `<g>${glyph}</g>`}</g>
            {/each}

            <g transform="translate(985.5 642)"><path d="M0 29Q-1 18-7.500 10.500A12.300 12.300 0 1 1 7.500 10.500Q1 18 0 29Z" fill="#ea4335" stroke="#d2372b" stroke-width=".6" /><circle r="4.500" fill="#811411" /></g>

            <g class="brand" font-size="21"><text x="550" y="865" textLength="62" lengthAdjust="spacingAndGlyphs"><tspan fill="#4285f4">G</tspan><tspan fill="#ea4335">o</tspan><tspan fill="#fbbc05">o</tspan><tspan fill="#4285f4">g</tspan><tspan fill="#34a853">l</tspan><tspan fill="#ea4335">e</tspan></text></g>
            <rect x="1147" y="858" width="281" height="14" fill="#f5f5f5" opacity=".75" />
            <g class="legal"><text x="1152" y="868" textLength="109">Map data ©2018 Google</text><text x="1273" y="868" textLength="57">Terms of Use</text><text x="1342" y="868" textLength="80">Report a map error</text></g>

            <g class="card"><rect x="554" y="482" width="96" height="31" rx="2" fill="#fff" /></g>
            <path d="M591.500 482V513" stroke="#e4e4e4" />
            <text x="562" y="502" class="mode on" textLength="22">Map</text><text x="600" y="502" class="mode" textLength="42">Satellite</text>
            <g class="card"><rect x="1389" y="482" width="25" height="25" rx="1" fill="#fff" /><rect x="1390" y="755" width="28" height="28" rx="1" fill="#fff" /><rect x="1390" y="793" width="28" height="55" rx="1" fill="#fff" /></g>
            <path d="M1395 492V488H1399M1404 488H1408V492M1408 497V501H1404M1399 501H1395V497" fill="none" stroke="#666" stroke-width="2" />
            <path d="M1394 820.500H1413" stroke="#e6e6e6" /><path d="M1399 806.500H1410M1404.500 801V812M1399 834.500H1410" stroke="#666" stroke-width="3" />
            <circle cx="1404" cy="761.500" r="3" fill="#fbbf2d" stroke="#c98918" stroke-width=".7" /><path d="M1400 765.500H1408L1409.500 772H1407L1406.500 777H1401.500L1401 772H1398.500Z" fill="#fbb825" stroke="#d08d1b" stroke-width=".7" /><path d="M1402 765.500H1406L1404 768Z" fill="#c7601c" />

            <defs><linearGradient id="tipfill" x2="0" y2="1"><stop stop-color="#3b3b3b" /><stop offset="1" stop-color="#181818" /></linearGradient></defs>
            <rect x="986" y="667" width="246" height="25" rx="3" fill="url(#tipfill)" />
            <text x="991.500" y="683.500" class="tip" textLength="235.500">p. Long Biên, Long Biên, Hà Nội, Vietnam</text>
          </svg>
          <h4 class="result">Everything looks good, traffic is healthy</h4>
        </div>
        <div class="scroll"><div></div></div>
      </div>
    </main>
  </div>
</div>

<style>
  :global(body) { overflow: hidden; }
  .desktop { width: 1920px; height: 1080px; display: flex; flex-direction: column; overflow: hidden; background: #000; font-family: "Noto Sans", "Open Sans", sans-serif; }
  svg { display: block; flex: none; }
  .panel { height: 21px; flex: none; display: flex; align-items: center; background: linear-gradient(#5f5d4f, #55534c 15%, #403f3a); color: #dfdbd2; padding-left: 1629px; }
  .g1 { margin-left: 10px; } .g2 { margin-left: 12px; } .g3 { margin-left: 13px; } .g4 { margin-left: 9px; }
  .clock { margin-left: 9px; width: 148px; white-space: nowrap; font-size: 12px; letter-spacing: -.04px; }
  .workspace { flex: 1; display: flex; min-height: 0; }
  .launcher { width: 43px; box-sizing: border-box; border-right: 1px solid #5b5848; padding-top: 5px; display: flex; flex-direction: column; gap: 4.96px;
    background: linear-gradient(#3b2920 0, #5c4a28 60px, #7a6f2a 230px, #4b4030 310px, #442e22 420px, #3f2c22 640px, #4a3827 780px, #5a4730 850px, #44301f 1000px, #3d291d); }
  .slot { height: 32px; display: flex; align-items: center; flex: none; }
  .slot.last { margin-top: 56px; }
  .pips { width: 5px; flex: none; display: flex; flex-direction: column; gap: 1px; }
  .pips i { border: 3px solid transparent; border-left-color: #ddd; border-right: 0; width: 0; }
  .pips b { width: 2px; height: 2px; background: #ddd; }
  .tile { filter: drop-shadow(0 0 1px #0008); }
  .focus { border: 3px solid transparent; border-right-color: #ddd; border-left: 0; margin-left: 2px; }
  .wallpaper { width: 9px; background: linear-gradient(#060806, #0a0d08 80px, #1b2410 160px, #1d3309 230px, #24420f 280px, #081408 390px, #050706 600px, #050706 730px, #18300f 755px, #1b1a0e 800px, #3a2c1c 855px, #a67a4e 875px, #8a6440 888px, #531e0e 915px, #3c2a18 960px, #3a1e10); }
  .back-window { width: 10px; display: flex; flex-direction: column; border-top-left-radius: 5px; overflow: hidden; }
  .bw-title { height: 58px; background: #2c2b28; }
  .bw-bar { height: 40px; background: linear-gradient(90deg, #e0e0df, #b5b5b4); border-bottom: 1px solid #999; }
  .bw-body { flex: 1; background: linear-gradient(90deg, #cfcfcf, #999); }
  .window { flex: 1; display: flex; flex-direction: column; min-width: 0; }
  .titlebar { height: 26px; display: flex; align-items: center; padding: 0 6px; box-sizing: border-box; border-radius: 6px 6px 0 0; background: linear-gradient(#62604f, #55534b 15%, #3d3c37); }
  .titlebar svg { margin-top: -1px; }
  .menus { display: flex; padding-left: 13px; color: #dfdbd2; font-size: 12.5px; letter-spacing: .35px; }
  .menus span { white-space: nowrap; flex: none; }
  .tabs { height: 32px; display: flex; background: #3c3b37; box-shadow: inset 0 -1px #2c2b28; }
  .tab { width: 224px; box-sizing: border-box; border-top: 2px solid #f1744a; background: #f5f4f2; display: flex; align-items: center; justify-content: space-between; padding: 0 11px 1px 9px; font-size: 12px; color: #4c4c4c; letter-spacing: .1px; }
  .plus { margin: 7px 0 0 9px; }
  .toolbar { height: 41px; box-sizing: border-box; border-bottom: 1px solid #bfbebc; background: #f3f2f0; display: flex; align-items: center; }
  .nav { margin-right: 110px; }
  .url, .search { height: 30px; box-sizing: border-box; border: 1px solid #c6c4c1; border-radius: 4px; background: #fff; display: flex; align-items: center; font-size: 12px; }
  .url { width: 1019px; padding: 0 3px 0 9px; color: #333; }
  .addr { flex: 1; padding-left: 9px; letter-spacing: .05px; }
  .addr em { font-style: normal; color: #999; }
  .search { width: 292px; margin-left: 10px; padding-left: 7px; color: #8c8c8c; gap: 7px; }
  .tools { margin-left: 125px; }
  .viewport { flex: 1; display: flex; background: #fff; min-height: 0; }
  .page { width: 1848px; display: flex; flex-direction: column; align-items: center; font: 16px "DejaVu Serif", serif; color: #000; }
  .page h1, .page h2, .page h3, .page h4 { margin: 0; white-space: nowrap; }
  h1 { font-size: 32px; line-height: 38px; padding-top: 40px; }
  .page h3 { font-size: 19px; letter-spacing: .1px; line-height: 22px; margin-top: 21px; }
  .page h4 { font-size: 16px; line-height: 19px; margin-top: 23px; }
  .form { display: flex; align-items: center; margin-top: 21px; height: 25px; }
  .form span { width: 50px; }
  .input, button { height: 24px; box-sizing: border-box; border: 1px solid #a9a8a5; border-radius: 4px; font: 12px/22px "Noto Sans", sans-serif; letter-spacing: .1px; color: #3c3c3c; }
  .input { width: 216px; padding-left: 6px; background: linear-gradient(#f0f0f0, #fff 35%); border-top-color: #888; }
  button { width: 67px; margin-left: 7px; padding: 0; background: linear-gradient(#fdfdfd, #ebeae8); }
  h2 { font-size: 24px; line-height: 28px; padding-top: 22px; }
  .info { margin-top: 20px; padding-left: 40px; line-height: 19px; text-align: center; white-space: nowrap; letter-spacing: -.14px; }
  .info b { letter-spacing: .15px; }
  .map { margin-top: 16px; }
  .page .result { margin-top: 21px; }
  .scroll { width: 10px; background: #e6e5e3; display: flex; justify-content: flex-end; }
  .scroll div { width: 3px; height: 900px; background: #e9805e; }
  .ln { fill: none; stroke-linejoin: round; stroke-linecap: round; }
  .map text { font-family: Roboto, sans-serif; }
  .lb { paint-order: stroke; stroke: #fff; stroke-width: 2px; stroke-opacity: .75; stroke-linejoin: round; }
  .poi { fill: #64798a; } .teal { fill: #138794; } .park { fill: #24892d; } .med { fill: #c15c68; } .shop { fill: #3f74bd; }
  .ward { fill: #64748a; font-weight: 700; } .area { fill: #7e90ad; font-weight: 700; }
  .road { fill: #5c6b7b; } .river { fill: #4285d6; stroke: #aadaff; }
  .sh { font-size: 9px; font-weight: 700; }
  .map .brand text { font-family: "Open Sans", sans-serif; font-weight: 600; paint-order: stroke; stroke: #fff; stroke-width: 1.500px; }
  .legal { font-size: 10px; fill: #444; }
  .mode { font-size: 11px; fill: #565656; } .on { font-weight: 700; fill: #000; }
  .card { filter: drop-shadow(0 1px 1.500px #0005); }
  .map .tip { font: 12.500px "Noto Sans", sans-serif; fill: #fff; }
</style>
